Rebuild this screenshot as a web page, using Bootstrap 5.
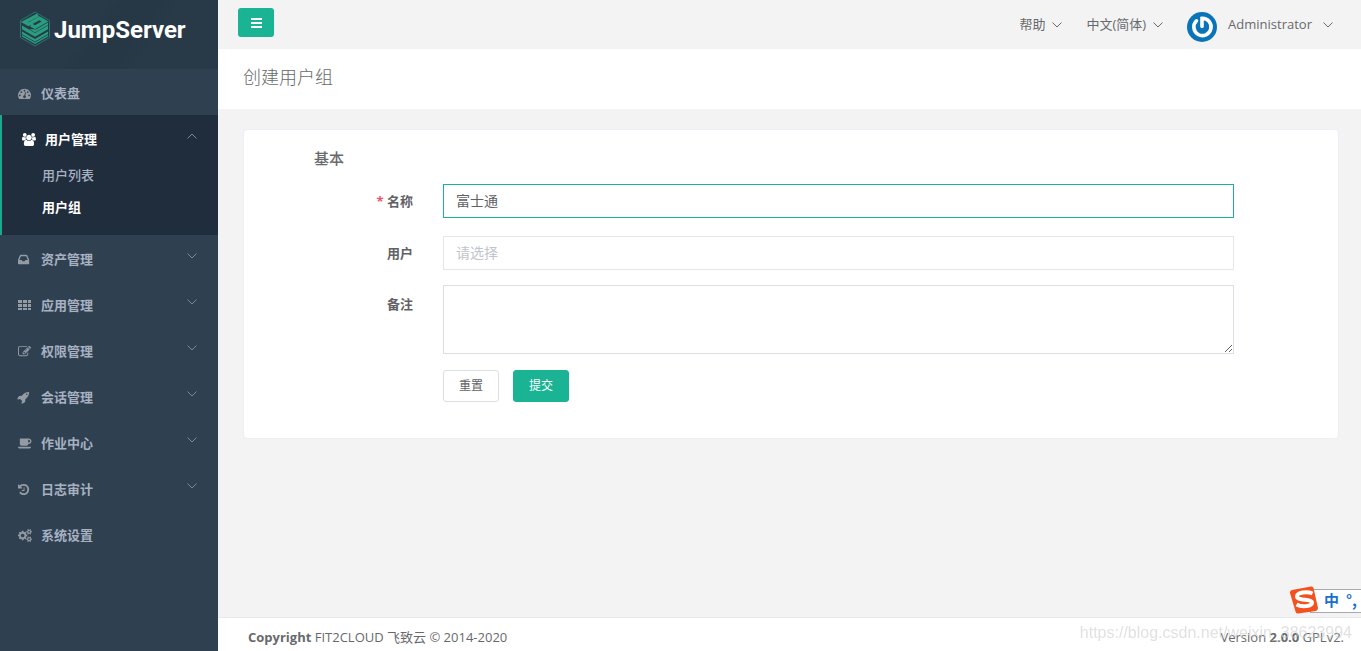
<!DOCTYPE html>
<html lang="zh-CN">
<head>
<meta charset="utf-8">
<meta name="viewport" content="width=device-width, initial-scale=1">
<title>JumpServer - 创建用户组</title>
<link href="https://cdn.jsdelivr.net/npm/bootstrap@5.3.0/dist/css/bootstrap.min.css" rel="stylesheet">
<style>
  :root { --js-green: #1ab394; --js-text: #676a6c; --js-nav: #2f4050; --js-nav-dark: #202d3d; }
  body { font-family: "Open Sans", "Noto Sans CJK SC", sans-serif; font-size: 13px; line-height: 20px; color: var(--js-text); background: #f3f3f4; }
  a { text-decoration: none; }
  .sidebar { width: 218px; background: var(--js-nav); }
  .brand-area { height: 69px; padding: 11px 20px 0; background: linear-gradient(125deg, #283948 0 40%, #263746 48% 60%, #283a48 70%); }
  .brand-name { font-family: Roboto, sans-serif; font-weight: 700; font-size: 24px; line-height: 38px; color: #fff; }
  .side-link { display: flex; align-items: center; height: 46px; padding: 2px 21px 0 18px; color: #a7b1c2; font-weight: 600; }
  .side-link .label-text { flex: 1; }
  .side-icon { width: 15px; height: 13px; margin-right: 8px; fill: #949ba3; overflow: visible; }
  .caret-icon { width: 10px; height: 6px; fill: none; stroke: #7d8894; stroke-width: 1; }
  .side-link .caret-icon { margin-bottom: 6px; }
  .open-group { background: var(--js-nav-dark); border-left: 2px solid #19aa8d; padding-bottom: 11px; }
  .open-group .side-link { color: #fff; padding-left: 20px; }
  .open-group .side-icon { fill: #fff; }
  .sub-link { display: block; height: 32px; padding: 4px 0 8px 40px; color: #a7b1c2; font-weight: 500; }
  .sub-link.active { color: #fff; font-weight: 700; }
  .open-group { height: 120px; }
  .top-row { height: 49px; padding: 0 28px 0 20px; }
  .toggle-btn { width: 36px; height: 29px; margin-top: 8px; background: var(--js-green); border: 0; border-radius: 3px; }
  .toggle-btn:hover { background: #18a689; }
  .top-link { display: flex; align-items: center; color: var(--js-text); gap: 7px; }
  .top-link .caret-icon { stroke: var(--js-text); }
  .top-link > span { padding-bottom: 2px; }
  .user-link { margin-left: 24px; }
  .title-row { height: 60px; padding: 16px 25px; background: #fff; }
  .title-row h1 { font-size: 18px; line-height: 24px; font-weight: 300; margin: 0; }
  .main-area { padding: 20px 22px 20px 25px; }
  .form-panel { background: #fff; border: 1px solid #ebeef5; border-radius: 4px; padding: 17px 104px 36px 70px; }
  .form-panel h2 { font-size: 15px; line-height: 22px; font-weight: 500; margin: 0 0 15px; }
  .form-line { display: flex; margin-bottom: 18px; }
  .form-line label { width: 99px; text-align: right; font-weight: 700; line-height: 34px; flex: none; margin-right: 30px; color: #606266; }
  .required-mark { color: #ed5565; }
  .form-line .form-control { border-radius: 0; border-color: #e5e6e7; font-size: 14px; line-height: 20px; height: 34px; padding: 5px 12px 7px; color: #606266; box-shadow: none; }
  .form-line .form-control:focus, .form-line .form-control.current { border-color: var(--js-green); box-shadow: none; }
  .form-line .form-control::placeholder { color: #c0c4cc; }
  .form-line textarea.form-control { height: 69px; border-color: #dcdfe6; }
  .users-line { margin-bottom: 15px; }
  .note-line label { line-height: 38px; }
  .form-actions { gap: 14px; margin-left: 129px; }
  .form-actions .btn { width: 56px; height: 32px; padding: 0; font-size: 12px; border-radius: 3px; }
  .btn-reset { border-color: #dcdfe6; color: #606266; background: #fff; }
  .btn-send, .btn-send:hover { background: var(--js-green); border-color: var(--js-green); color: #fff; }
  .page-foot { height: 34px; padding: 9px 17px 0 30px; background: #fff; border-top: 1px solid #e7eaec; }
  .watermark { right: 9px; bottom: 8px; font: 16px/20px "Liberation Sans", sans-serif; color: rgba(205, 205, 205, .6); pointer-events: none; }
  .ime-bar { right: 0; bottom: 38px; height: 27px; }
  .ime-keys { width: 51px; height: 24px; margin: 3px 0 0 -8px; padding-left: 13px; gap: 7px; background: #fff; border: 1px solid #a9aaae; border-right: 0; color: #1a6fc9; font: 700 15px/20px "Noto Sans CJK SC", sans-serif; }
</style>
</head>
<body>
<svg class="d-none" aria-hidden="true">
  <symbol id="down" viewBox="0 0 10 6"><path d="M.5.5 5 5 9.500.5"/></symbol>
  <symbol id="up" viewBox="0 0 10 6"><path d="M.5 5.500 5 1l4.500 4.500"/></symbol>
</svg>
<div class="d-flex min-vh-100">
  <nav class="sidebar flex-shrink-0">
    <a href="#" class="brand-area d-flex align-items-start">
      <svg width="30" height="36" viewBox="0 0 30 36" aria-hidden="true">
        <path d="M15 1 29.500 9.500v17L15 35 .5 26.500v-17z" fill="none" stroke="#23776e"/>
        <path d="M18 4 4.500 11 8.500 13.200 19.500 7.200 25 10.500 15 16.200 11 14" fill="none" stroke="#2a9c80" stroke-width="3.400"/>
        <path d="M2 14.500 15 22 28 14.500v3.800L15 25.800 2 18.300zM2 20.500 15 28 28 20.500v5L15 33 2 25.500z" fill="#2a9c80"/>
        <path d="M2 23.500 15 31 28 23.500" fill="none" stroke="#263747" stroke-width="0.800"/>
        <path d="M16 18.500 28 11.500v2.600L15 21.500 9 18z" fill="#2a9c80"/>
      </svg>
      <span class="brand-name ms-1">JumpServer</span>
    </a>
    <a href="#" class="side-link">
      <svg class="side-icon" viewBox="0 0 2048 1792" preserveAspectRatio="xMinYMid meet"><path d="M384 1152q0-53-37.500-90.500t-90.500-37.500-90.500 37.500-37.500 90.500 37.500 90.500 90.500 37.500 90.500-37.500 37.500-90.500zm192-448q0-53-37.500-90.500t-90.500-37.500-90.500 37.500-37.500 90.500 37.500 90.500 90.500 37.500 90.500-37.500 37.500-90.500zm428 481l101-382q6-26-7.500-48.500t-38.500-29.500-48 6.500-30 39.500l-101 382q-60 5-107 43.500t-63 98.500q-20 77 20 146t117 89 146-20 89-117q16-60-6-117t-72-91zm660-33q0-53-37.500-90.500t-90.500-37.500-90.500 37.500-37.500 90.500 37.500 90.500 90.500 37.500 90.500-37.500 37.500-90.500zm-640-640q0-53-37.500-90.500t-90.500-37.500-90.500 37.500-37.500 90.500 37.500 90.500 90.500 37.500 90.500-37.500 37.500-90.500zm448 192q0-53-37.500-90.500t-90.500-37.500-90.500 37.500-37.500 90.500 37.500 90.500 90.500 37.500 90.500-37.500 37.500-90.500zm320 448q0 261-141 483-19 29-54 29h-1402q-35 0-54-29-141-221-141-483 0-182 71-348t191-286 286-191 348-71 348 71 286 191 191 286 71 348z"/></svg>
      <span class="label-text">仪表盘</span>
    </a>
    <div class="open-group">
      <a href="#" class="side-link">
        <svg class="side-icon" viewBox="0 0 2048 1792" preserveAspectRatio="xMinYMid meet"><path d="M593 896q-162 5-265 128h-134q-82 0-138-40.500t-56-118.500q0-353 124-353 6 0 43.500 21t97.500 42.500 119 21.500q67 0 133-23-5 37-5 66 0 139 81 256zm1071 637q0 120-73 189.500t-194 69.500h-874q-121 0-194-69.500t-73-189.500q0-53 3.500-103.500t14-109 26.500-108.500 43-97.500 62-81 85.500-53.500 111.500-20q10 0 43 21.500t73 48 107 48 135 21.500 135-21.500 107-48 73-48 43-21.500q61 0 111.500 20t85.500 53.500 62 81 43 97.500 26.500 108.500 14 109 3.500 103.500zm-1024-1277q0 106-75 181t-181 75-181-75-75-181 75-181 181-75 181 75 75 181zm704 384q0 159-112.500 271.500t-271.500 112.500-271.500-112.500-112.500-271.500 112.500-271.500 271.500-112.500 271.500 112.500 112.500 271.500zm576 225q0 78-56 118.500t-138 40.500h-134q-103-123-265-128 81-117 81-256 0-29-5-66 66 23 133 23 59 0 119-21.500t97.500-42.500 43.500-21q124 0 124 353zm-128-609q0 106-75 181t-181 75-181-75-75-181 75-181 181-75 181 75 75 181z"/></svg>
        <span class="label-text">用户管理</span><svg class="caret-icon"><use href="#up"/></svg>
      </a>
      <a href="#" class="sub-link">用户列表</a>
      <a href="#" class="sub-link active">用户组</a>
    </div>
    <a href="#" class="side-link">
      <svg class="side-icon" viewBox="128 0 2048 1792" preserveAspectRatio="xMinYMid meet"><path d="M1151 960h316q-1-3-2.500-8.500t-2.500-7.500l-212-496h-708l-212 496q-1 3-2.500 8.500t-2.500 7.500h316l95 192h320zm513 30v482q0 26-19 45t-45 19h-1408q-26 0-45-19t-19-45v-482q0-62 25-123l238-552q10-25 36.500-42t52.500-17h832q26 0 52.500 17t36.500 42l238 552q25 61 25 123z"/></svg>
      <span class="label-text">资产管理</span><svg class="caret-icon"><use href="#down"/></svg>
    </a>
    <a href="#" class="side-link">
      <svg class="side-icon" viewBox="0 0 15 13"><path d="M0 1h4v3H0zM5 1h4v3H5zM10 1h3v3h-3zM0 5h4v3H0zM5 5h4v3H5zM10 5h3v3h-3zM0 9h4v2H0zM5 9h4v2H5zM10 9h3v2h-3z"/></svg>
      <span class="label-text">应用管理</span><svg class="caret-icon"><use href="#down"/></svg>
    </a>
    <a href="#" class="side-link">
      <svg class="side-icon" viewBox="0 0 2048 1792" preserveAspectRatio="xMinYMid meet"><path d="M888 1184l116-116-152-152-116 116v56h96v96h56zm440-720q-16-16-33 1l-350 350q-17 17-1 33t33-1l350-350q17-17 1-33zm80 594v190q0 119-84.500 203.500t-203.500 84.500h-832q-119 0-203.500-84.500t-84.500-203.500v-832q0-119 84.500-203.500t203.500-84.500h832q63 0 117 25 15 7 18 23 3 17-9 29l-49 49q-14 14-32 8-23-6-45-6h-832q-66 0-113 47t-47 113v832q0 66 47 113t113 47h832q66 0 113-47t47-113v-126q0-13 9-22l64-64q15-15 35-7t20 29zm-96-738l288 288-672 672h-288v-288zm444 132l-92 92-288-288 92-92q28-28 68-28t68 28l152 152q28 28 28 68t-28 68z"/></svg>
      <span class="label-text">权限管理</span><svg class="caret-icon"><use href="#down"/></svg>
    </a>
    <a href="#" class="side-link">
      <svg class="side-icon" viewBox="128 0 2048 1792" preserveAspectRatio="xMinYMid meet"><path d="M1440 448q0-40-28-68t-68-28-68 28-28 68 28 68 68 28 68-28 28-68zm224-288q0 249-75.500 430.500t-253.500 360.500q-81 80-195 176l-20 379q-2 16-16 26l-384 224q-7 4-16 4-12 0-23-9l-64-64q-13-14-8-32l85-276-281-281-276 85q-3 1-9 1-14 0-23-9l-64-64q-17-19-5-39l224-384q10-14 26-16l379-20q96-114 176-195 188-187 358-258t431-71q14 0 24 9.500t10 22.500z"/></svg>
      <span class="label-text">会话管理</span><svg class="caret-icon"><use href="#down"/></svg>
    </a>
    <a href="#" class="side-link">
      <svg class="side-icon" viewBox="0 0 2048 1792" preserveAspectRatio="xMinYMid meet"><path d="M1664 576q0-80-56-136t-136-56h-64v384h64q80 0 136-56t56-136zm-1664 768h1792q0 106-75 181t-181 75h-1280q-106 0-181-75t-75-181zm1856-768q0 159-112.500 271.500t-271.500 112.500h-64v32q0 92-66 158t-158 66h-704q-92 0-158-66t-66-158v-736q0-26 19-45t45-19h1152q159 0 271.500 112.500t112.500 271.500z"/></svg>
      <span class="label-text">作业中心</span><svg class="caret-icon"><use href="#down"/></svg>
    </a>
    <a href="#" class="side-link">
      <svg class="side-icon" viewBox="128 0 2048 1792" preserveAspectRatio="xMinYMid meet"><path d="M1664 896q0 156-61 298t-164 245-245 164-298 61q-172 0-327-72.500t-264-204.500q-7-10-6.500-22.500t8.500-20.500l137-138q10-9 25-9 16 2 23 12 73 95 179 147t225 52q104 0 198.500-40.500t163.500-109.500 109.500-163.500 40.500-198.500-40.500-198.500-109.500-163.500-163.500-109.500-198.500-40.500q-98 0-188 35.500t-160 101.500l137 138q31 30 14 69-17 40-59 40h-448q-26 0-45-19t-19-45v-448q0-42 40-59 39-17 69 14l130 129q107-101 244.500-156.500t284.500-55.500q156 0 298 61t245 164 164 245 61 298zm-640-288v448q0 14-9 23t-23 9h-320q-14 0-23-9t-9-23v-64q0-14 9-23t23-9h224v-352q0-14 9-23t23-9h64q14 0 23 9t9 23z"/></svg>
      <span class="label-text">日志审计</span><svg class="caret-icon"><use href="#down"/></svg>
    </a>
    <a href="#" class="side-link">
      <svg class="side-icon" viewBox="0 0 2048 1792" preserveAspectRatio="xMinYMid meet"><path d="M896 896q0-106-75-181t-181-75-181 75-75 181 75 181 181 75 181-75 75-181zm768 512q0-52-38-90t-90-38-90 38-38 90q0 53 37.500 90.500t90.500 37.500 90.500-37.500 37.500-90.500zm0-1024q0-52-38-90t-90-38-90 38-38 90q0 53 37.500 90.500t90.500 37.500 90.500-37.500 37.500-90.500zm-384 421v185q0 10-7 19.500t-16 10.500l-155 24q-11 35-32 76 34 48 90 115 7 11 7 20 0 12-7 19-23 30-82.500 89.500t-78.500 59.500q-11 0-21-7l-115-90q-37 19-77 31-11 108-23 155-7 24-30 24h-186q-11 0-20-7.500t-10-17.500l-23-153q-34-10-75-31l-118 89q-7 7-20 7-11 0-21-8-144-133-144-160 0-9 7-19 10-14 41-53t47-61q-23-44-35-82l-152-24q-10-1-17-9.500t-7-19.500v-185q0-10 7-19.500t16-10.500l155-24q11-35 32-76-34-48-90-115-7-11-7-20 0-12 7-20 22-30 82-89t79-59q11 0 21 7l115 90q34-18 77-32 11-108 23-154 7-24 30-24h186q11 0 20 7.500t10 17.500l23 153q34 10 75 31l118-89q8-7 20-7 11 0 21 8 144 133 144 160 0 8-7 19-12 16-42 54t-45 60q23 48 34 82l152 23q10 2 17 10.500t7 19.500zm640 533v140q0 16-149 31-12 27-30 52 51 113 51 138 0 4-4 7-122 71-124 71-8 0-46-47t-52-68q-20 2-30 2t-30-2q-14 21-52 68t-46 47q-2 0-124-71-4-3-4-7 0-25 51-138-18-25-30-52-149-15-149-31v-140q0-16 149-31 13-29 30-52-51-113-51-138 0-4 4-7 4-2 35-20t59-34 30-16q8 0 46 46.500t52 67.500q20-2 30-2t30 2q51-71 92-112l6-2q4 0 124 70 4 3 4 7 0 25-51 138 17 23 30 52 149 15 149 31zm0-1024v140q0 16-149 31-12 27-30 52 51 113 51 138 0 4-4 7-122 71-124 71-8 0-46-47t-52-68q-20 2-30 2t-30-2q-14 21-52 68t-46 47q-2 0-124-71-4-3-4-7 0-25 51-138-18-25-30-52-149-15-149-31v-140q0-16 149-31 13-29 30-52-51-113-51-138 0-4 4-7 4-2 35-20t59-34 30-16q8 0 46 46.500t52 67.500q20-2 30-2t30 2q51-71 92-112l6-2q4 0 124 70 4 3 4 7 0 25-51 138 17 23 30 52 149 15 149 31z"/></svg>
      <span class="label-text">系统设置</span>
    </a>
  </nav>

  <div class="flex-grow-1 d-flex flex-column">
    <header class="top-row d-flex">
      <button type="button" class="toggle-btn d-flex align-items-center justify-content-center p-0" aria-label="菜单">
        <svg width="11" height="10" viewBox="0 0 11 10" fill="#fff"><path d="M0 0h11v2H0zM0 4h11v2H0zM0 8h11v2H0z"/></svg>
      </button>
      <div class="d-flex ms-auto">
        <a href="#" class="top-link"><span>帮助</span><svg class="caret-icon"><use href="#down"/></svg></a>
        <a href="#" class="top-link ms-4"><span>中文(简体)</span><svg class="caret-icon"><use href="#down"/></svg></a>
        <a href="#" class="top-link user-link">
          <svg width="30" height="30" viewBox="0 0 30 30" class="mt-1" aria-hidden="true"><circle cx="15" cy="15" r="15" fill="#0a74b8"/><path d="M9.500 8.800A8.600 8.600 0 1 0 15 6.400v8" fill="none" stroke="#fff" stroke-width="3.600" stroke-linecap="round"/></svg>
          <span class="ms-1 me-1">Administrator</span><svg class="caret-icon"><use href="#down"/></svg></a>
      </div>
    </header>
    <div class="title-row"><h1>创建用户组</h1></div>
    <main class="main-area flex-grow-1">
      <form class="form-panel">
        <h2>基本</h2>
        <div class="form-line"><label for="groupName"><span class="required-mark">*</span> 名称</label><input id="groupName" type="text" class="form-control current" value="富士通"></div>
        <div class="form-line users-line"><label for="groupUsers">用户</label><input id="groupUsers" type="text" class="form-control" placeholder="请选择"></div>
        <div class="form-line note-line mb-3"><label for="groupNote">备注</label><textarea id="groupNote" class="form-control"></textarea></div>
        <div class="form-actions d-flex"><button type="reset" class="btn btn-reset">重置</button><button type="submit" class="btn btn-send">提交</button></div>
      </form>
    </main>
    <footer class="page-foot d-flex justify-content-between">
      <span><strong>Copyright</strong> FIT2CLOUD 飞致云 © 2014-2020</span>
      <span>Version <strong>2.0.0</strong> GPLv2.</span>
    </footer>
  </div>
</div>
<div class="watermark position-fixed">https://blog.csdn.net/weixin_38623994</div>
<div class="ime-bar position-fixed d-flex">
  <svg class="position-relative" width="28" height="28" viewBox="0 0 28 28" aria-hidden="true"><path d="M2 4 21 .5q2-.3 2.500 1.500L28 22q0 2-2 3L8 27.500q-2 .3-2.500-2L0 7q-.3-2.500 2-3z" fill="#f4511e"/><path d="M22.500 7.500C17 5 7 6.500 7 10.500c0 4.500 15 2 15 6 0 4-10 5-15.500 2" fill="none" stroke="#fff" stroke-width="4"/></svg>
  <span class="ime-keys d-flex"><span>中</span><span>°,</span></span>
</div>
<script src="https://cdn.jsdelivr.net/npm/bootstrap@5.3.0/dist/js/bootstrap.bundle.min.js"></script>
</body>
</html>
